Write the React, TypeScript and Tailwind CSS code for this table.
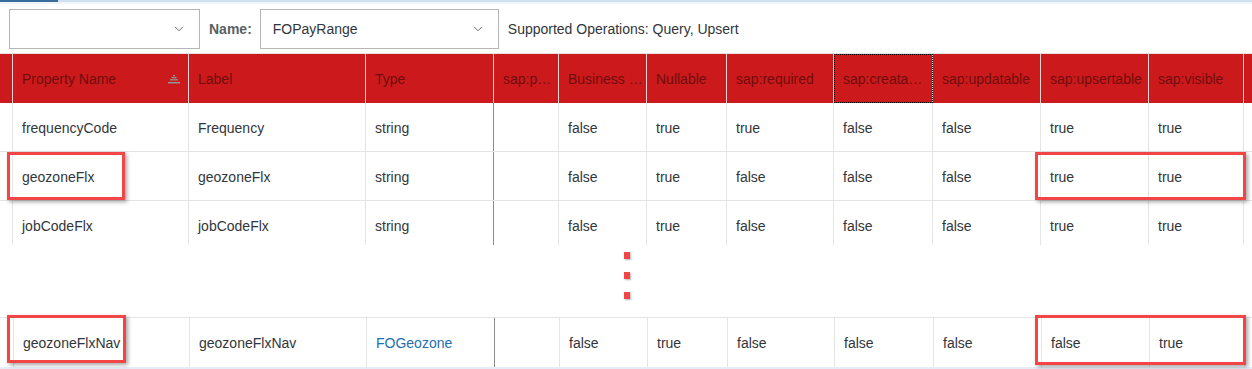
import React from 'react';

const GRID =
  'grid grid-cols-[13px_176px_177px_128px_65px_88px_80px_107px_99px_108px_108px_95px_8px]';

const headers = [
  'Property Name',
  'Label',
  'Type',
  'sap:p…',
  'Business …',
  'Nullable',
  'sap:required',
  'sap:creata…',
  'sap:updatable',
  'sap:upsertable',
  'sap:visible',
];

type Row = { cells: string[]; link?: boolean };

const rows: Row[] = [
  { cells: ['frequencyCode', 'Frequency', 'string', '', 'false', 'true', 'true', 'false', 'false', 'true', 'true'] },
  { cells: ['geozoneFlx', 'geozoneFlx', 'string', '', 'false', 'true', 'false', 'false', 'false', 'true', 'true'] },
  { cells: ['jobCodeFlx', 'jobCodeFlx', 'string', '', 'false', 'true', 'false', 'false', 'false', 'true', 'true'] },
];

const navRow: Row = {
  cells: ['geozoneFlxNav', 'geozoneFlxNav', 'FOGeozone', '', 'false', 'true', 'false', 'false', 'false', 'false', 'true'],
  link: true,
};

const Chevron = () => (
  <svg width="10" height="6" viewBox="0 0 10 6" fill="none">
    <polyline points="1,0.8 5,4.8 9,0.8" stroke="#6a6d70" strokeWidth="1" />
  </svg>
);

const SortIcon = () => (
  <svg width="12" height="9" viewBox="0 0 12 9">
    <rect x="5" y="0" width="2" height="1.2" fill="#8e9c9c" />
    <rect x="3.5" y="2" width="5" height="1.2" fill="#8e9c9c" />
    <rect x="2" y="4.2" width="8" height="1.2" fill="#8e9c9c" />
    <rect x="0" y="7" width="12" height="1.4" fill="#8e9c9c" />
  </svg>
);

const DataRow = ({ row, bottom = true }: { row: Row; bottom?: boolean }) => (
  <div className={`${GRID} h-[49px] ${bottom ? 'border-b border-[#e4e4e4]' : ''}`}>
    <div className="border-r border-[#e4e4e4]" />
    {row.cells.map((c, i) => (
      <div
        key={i}
        className={`flex items-center pl-[9px] pt-[2px] whitespace-nowrap ${
          i === 2 ? 'border-r border-[#8c8c8c]' : 'border-r border-[#e4e4e4]'
        } ${row.link && i === 2 ? 'text-[#1f6fb2]' : 'text-[#32363a]'}`}
      >
        {c}
      </div>
    ))}
    <div />
  </div>
);

const Mark = ({ className }: { className: string }) => (
  <div
    className={`absolute border-[3px] border-[#f24646] shadow-[2px_2px_4px_rgba(0,0,0,0.35)] ${className}`}
  />
);

export default function App() {
  return (
    <div className="relative w-[1252px] h-[369px] overflow-hidden bg-white font-['Liberation_Sans',Arial,sans-serif] text-[14px]">
      <div className="flex h-[2px]">
        <div className="w-[58px] bg-[#3a6b9c]" />
        <div className="flex-1 bg-[#cfe0f1]" />
      </div>
      <div className="h-[2px] bg-[#eef5fb]" />

      <div className="flex items-center h-[40px] mt-[5px] mb-[4px] pl-[9px]">
        <div className="w-[191px] h-full border border-[#b5b5b5] flex items-center justify-end pr-[15px]">
          <Chevron />
        </div>
        <span className="ml-[9px] font-bold text-[#5b5f63]">Name:</span>
        <div className="ml-[8px] w-[239px] h-full border border-[#b5b5b5] flex items-center justify-between pl-[12px] pr-[15px] text-[#32363a]">
          <span>FOPayRange</span>
          <Chevron />
        </div>
        <span className="ml-[9px] text-[#32363a]">Supported Operations: Query, Upsert</span>
      </div>

      <div className={`${GRID} h-[50px] bg-[#cc1a1c] border-t border-[#e2e2e2]`}>
        <div className="border-r border-[#ecd4d4]" />
        {headers.map((h, i) => (
          <div
            key={h}
            className={`flex items-center justify-between pl-[9px] pr-[8px] pt-[2px] whitespace-nowrap text-[#700c0d] border-r border-[#ecd4d4] ${
              i === 7 ? 'outline-1 outline-dotted outline-black -outline-offset-1' : ''
            }`}
          >
            <span>{h}</span>
            {i === 0 && <SortIcon />}
          </div>
        ))}
        <div />
      </div>

      <DataRow row={rows[0]} />
      <DataRow row={rows[1]} />
      <div className="h-[44px] overflow-hidden">
        <DataRow row={rows[2]} bottom={false} />
      </div>

      <div className="h-[72px] flex flex-col gap-[13px] pl-[624px] pt-[7px]">
        <div className="w-[6px] h-[7px] bg-[#f24646] shadow-[1px_1px_2px_rgba(0,0,0,0.3)]" />
        <div className="w-[6px] h-[7px] bg-[#f24646] shadow-[1px_1px_2px_rgba(0,0,0,0.3)]" />
        <div className="w-[6px] h-[7px] bg-[#f24646] shadow-[1px_1px_2px_rgba(0,0,0,0.3)]" />
      </div>

      <div className="border-t border-[#e4e4e4] pl-[1px]">
        <DataRow row={navRow} bottom={false} />
      </div>
      <div className="h-[3px] bg-[#e5eef8]" />

      <Mark className="left-[7px] top-[152px] w-[118px] h-[48px]" />
      <Mark className="left-[1035px] top-[152px] w-[211px] h-[48px]" />
      <Mark className="left-[7px] top-[315px] w-[119px] h-[48px]" />
      <Mark className="left-[1035px] top-[315px] w-[211px] h-[50px]" />
    </div>
  );
}
